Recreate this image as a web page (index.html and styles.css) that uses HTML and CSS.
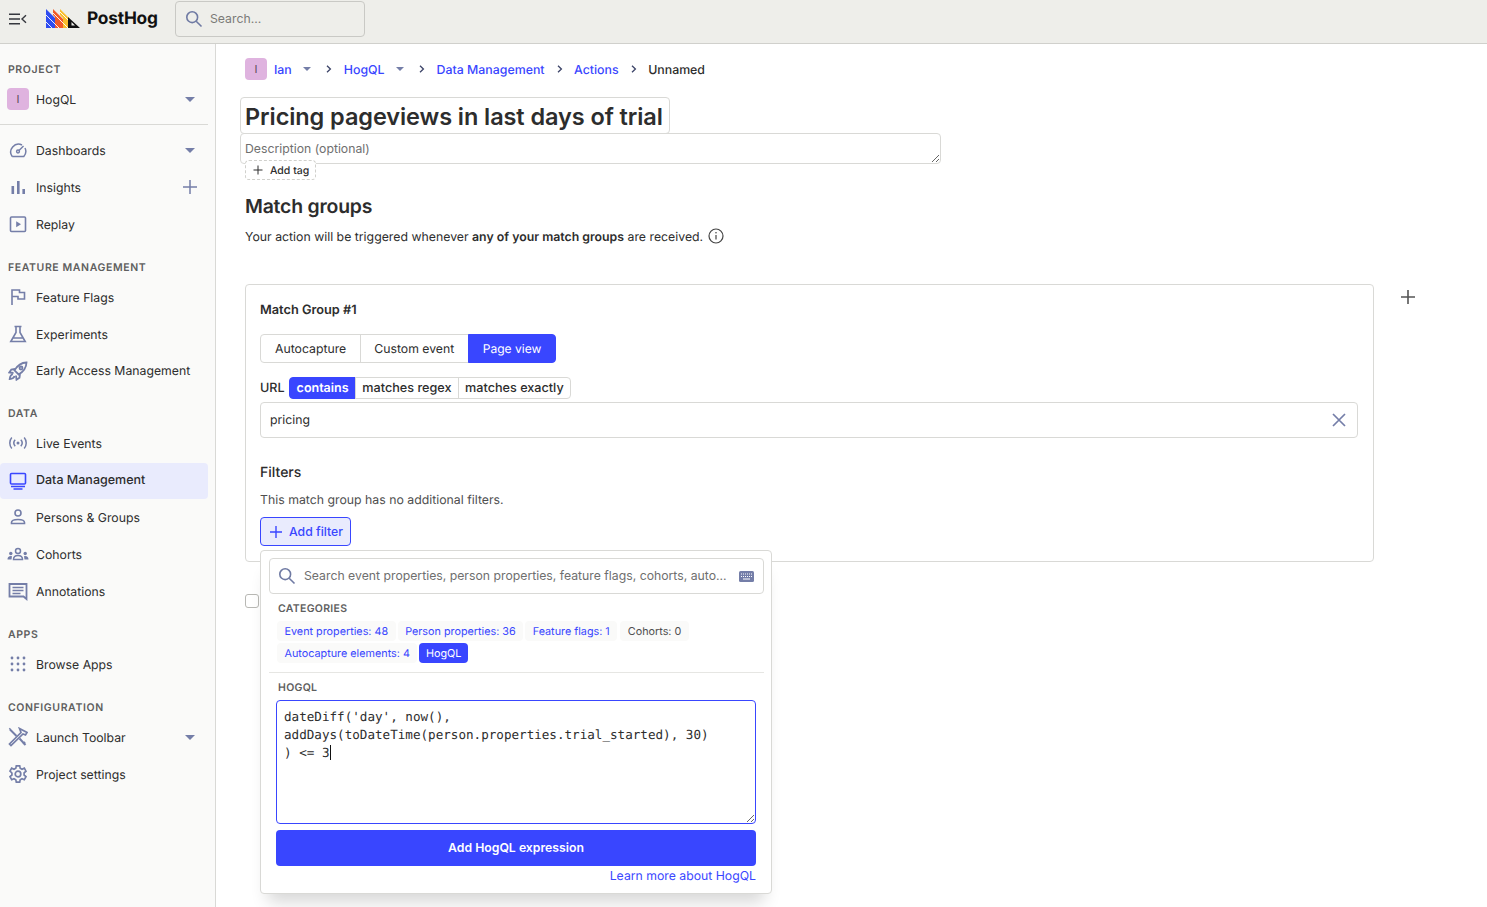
FILE: index.html
```html
<!DOCTYPE html>
<html lang="en">
<head>
<meta charset="utf-8">
<title>PostHog</title>
<link rel="stylesheet" href="styles.css">
</head>
<body>
<header class="topbar">
  <svg class="burger" width="18" height="12" viewBox="0 0 18 12" fill="none" stroke="#35373e" stroke-width="1.4"><path d="M0 1.2h11M0 6h11M0 10.8h11M17 2.2 13 6l4 3.8"/></svg>
  <svg class="logo" width="34" height="20" viewBox="0 0 34 20">
    <path fill="#2f4cf0" d="M0 0 9 9v10H0z"/>
    <path fill="#f15a29" d="M7 0 17 10v9H9V8L7 6z"/>
    <path fill="#f9bd2b" d="M14 0 24 10v9h-7V9l-3-3z"/>
    <path fill="none" stroke="#fff" stroke-width=".9" d="M0 6 13 19M0 13l6 6M7 4l15 15M14 3l10 10"/>
    <path fill="#111" fill-rule="evenodd" d="M22 8 34 19H22zM25.500 16.500H29L25.500 13z"/>
  </svg>
  <span class="brand">PostHog</span>
  <label class="top-search">
    <svg width="18" height="18" viewBox="0 0 18 18" fill="none" stroke="#6f7aa3" stroke-width="1.6"><circle cx="7.2" cy="7.2" r="5.4"/><path d="m11.2 11.2 5.3 5.3"/></svg>
    <input class="top-search-input" type="text" placeholder="Search...">
  </label>
</header>
<div class="layout">
  <aside class="sidebar">
    <h4 class="side-heading">PROJECT</h4>
    <div class="side-item side-project">
      <span class="avatar">I</span><span class="side-label project-label">HogQL</span>
      <svg class="caret" width="10" height="5" viewBox="0 0 10 5"><path d="M0 0h10L5 5z"/></svg>
    </div>
    <hr class="side-divider">
    <div class="side-item">
      <svg class="ic" width="20" height="20" viewBox="0 0 20 20" fill="none" stroke="#747ea8" stroke-width="1.5"><path d="M4.200 16.500h11.600a7.800 7.800 0 0 0 1.200-8.500M14 5a7.800 7.800 0 0 0-9.800 11.500"/><circle cx="10" cy="11.500" r="1.400"/><path d="m11 10.500 4.500-4.500"/></svg>
      <span class="side-label">Dashboards</span>
      <svg class="caret" width="10" height="5" viewBox="0 0 10 5"><path d="M0 0h10L5 5z"/></svg>
    </div>
    <div class="side-item">
      <svg class="ic" width="20" height="20" viewBox="0 0 20 20" fill="#747ea8"><rect x="3.500" y="9" width="2.600" height="8"/><rect x="9" y="4" width="2.600" height="13"/><rect x="14.400" y="12" width="2.600" height="5"/></svg>
      <span class="side-label">Insights</span>
      <svg class="plus-ic" width="14" height="14" viewBox="0 0 14 14" stroke="#747ea8" stroke-width="1.5"><path d="M7 0v14M0 7h14"/></svg>
    </div>
    <div class="side-item">
      <svg class="ic" width="20" height="20" viewBox="0 0 20 20" fill="none" stroke="#747ea8" stroke-width="1.6"><rect x="2.500" y="3" width="15" height="14.500" rx="1"/><path fill="#747ea8" stroke="none" d="M8.200 7.200 13 10.200l-4.800 3z"/></svg>
      <span class="side-label">Replay</span>
    </div>

    <h4 class="side-heading section-gap">FEATURE MANAGEMENT</h4>
    <div class="side-item">
      <svg class="ic" width="20" height="20" viewBox="0 0 20 20" fill="none" stroke="#747ea8" stroke-width="1.6"><path d="M4 18V3h7.500v2.500H16.500V12H10V9.500H4"/></svg>
      <span class="side-label">Feature Flags</span>
    </div>
    <div class="side-item">
      <svg class="ic" width="20" height="20" viewBox="0 0 20 20" fill="none" stroke="#747ea8" stroke-width="1.6"><path d="M6.500 2.500h7M8 2.500v6L2.800 17.500h14.400L12 8.500v-6M5 14h10"/></svg>
      <span class="side-label">Experiments</span>
    </div>
    <div class="side-item side-item-short">
      <svg class="ic" width="20" height="20" viewBox="0 0 20 20" fill="none" stroke="#747ea8" stroke-width="1.800"><path d="M18.500 1.500c-5.500.2-9 2.800-12 7.800l4.200 4.200c5-3 7.600-6.500 7.800-12zM7 8 3.300 8.500l-2 3 4.200.5M12 13l-.5 3.700-3 2-.5-4.200"/><circle cx="13" cy="7" r="1.500"/><path d="M4.800 13.200c-1.700.5-2.800 2.200-3.100 4.900 2.700-.3 4.400-1.400 4.900-3.100"/></svg>
      <span class="side-label">Early Access Management</span>
    </div>

    <h4 class="side-heading section-gap">DATA</h4>
    <div class="side-item">
      <svg class="ic" width="20" height="20" viewBox="0 0 20 20" fill="none" stroke="#747ea8" stroke-width="1.500"><circle cx="10" cy="10" r="1.500" fill="#747ea8" stroke="none"/><path d="M7.200 6.800a4.800 4.800 0 0 0 0 6.400M12.800 6.800a4.800 4.800 0 0 1 0 6.400M3.800 4.500a8.500 8.500 0 0 0 0 11M16.200 4.500a8.500 8.500 0 0 1 0 11"/></svg>
      <span class="side-label">Live Events</span>
    </div>
    <div class="side-item side-item-active">
      <svg class="ic" width="20" height="20" viewBox="0 0 20 20" fill="none" stroke="#3946ff" stroke-width="1.600"><rect x="2.500" y="2.500" width="15" height="10.500" rx="1"/><path d="M3 15.500h14M5.500 18h9"/></svg>
      <span class="side-label">Data Management</span>
    </div>
    <div class="side-item">
      <svg class="ic" width="20" height="20" viewBox="0 0 20 20" fill="none" stroke="#747ea8" stroke-width="1.600"><circle cx="10" cy="6" r="3"/><path d="M3.500 16.500v-1c0-2 2-3 6.500-3s6.500 1 6.500 3v1z"/></svg>
      <span class="side-label">Persons &amp; Groups</span>
    </div>
    <div class="side-item">
      <svg class="ic ic-wide" width="22" height="20" viewBox="0 0 22 20" fill="#747ea8"><circle cx="11" cy="7" r="2.500" fill="none" stroke="#747ea8" stroke-width="1.500"/><path d="M6.500 15.500c0-3 2-4 4.500-4s4.500 1 4.500 4z" fill="none" stroke="#747ea8" stroke-width="1.500"/><circle cx="3.800" cy="9.500" r="1.700"/><circle cx="18.200" cy="9.500" r="1.700"/><path d="M0.500 15.500c0-2.300 1-3.500 3.500-3.500l1 .3-.5 3.200zM21.500 15.500c0-2.300-1-3.500-3.500-3.500l-1 .3.500 3.200z"/></svg>
      <span class="side-label">Cohorts</span>
    </div>
    <div class="side-item">
      <svg class="ic" width="20" height="20" viewBox="0 0 20 20" fill="none" stroke="#747ea8" stroke-width="1.800"><path d="M1.500 3h17v15l-3-2.500H1.500z"/><path d="M4.500 6.500h11M4.500 9.500h11M4.500 12.500h8" stroke-width="1.400"/></svg>
      <span class="side-label">Annotations</span>
    </div>

    <h4 class="side-heading section-gap">APPS</h4>
    <div class="side-item">
      <svg class="ic" width="20" height="20" viewBox="0 0 20 20" fill="#747ea8"><circle cx="4" cy="4" r="1.400"/><circle cx="10" cy="4" r="1.400"/><circle cx="16" cy="4" r="1.400"/><circle cx="4" cy="10" r="1.400"/><circle cx="10" cy="10" r="1.400"/><circle cx="16" cy="10" r="1.400"/><circle cx="4" cy="16" r="1.400"/><circle cx="10" cy="16" r="1.400"/><circle cx="16" cy="16" r="1.400"/></svg>
      <span class="side-label">Browse Apps</span>
    </div>

    <h4 class="side-heading section-gap">CONFIGURATION</h4>
    <div class="side-item">
      <svg class="ic" width="20" height="20" viewBox="0 0 20 20" fill="none" stroke="#747ea8" stroke-width="2"><path d="M2 2.500 8.500 9M11.500 11.500l6 6.500M15 17l2-2" /><path d="M11.500 1.500 19 5.500l-1.500 2.500-2.500-1L3 18.500 1.500 17 13 5.500z" stroke-width="1.700"/><path d="M2.500 1.500 1.500 2.500" /></svg>
      <span class="side-label">Launch Toolbar</span>
      <svg class="caret" width="10" height="5" viewBox="0 0 10 5"><path d="M0 0h10L5 5z"/></svg>
    </div>
    <div class="side-item">
      <svg class="ic" width="20" height="20" viewBox="0 0 20 20" fill="none" stroke="#747ea8" stroke-width="1.700"><circle cx="10" cy="10" r="2.800"/><path d="M8.300 1.800h3.400l.5 2.500 1.800.9 2.300-1 1.700 3-1.900 1.700v2.100l1.900 1.700-1.700 3-2.300-1-1.800 1-.5 2.500H8.300l-.5-2.500-1.800-1-2.300 1-1.700-3 1.900-1.700V9L2 7.200l1.700-3 2.300 1 1.800-.9z"/></svg>
      <span class="side-label">Project settings</span>
    </div>
  </aside>

  <main class="content">
    <nav class="crumbs">
      <span class="avatar">I</span>
      <a class="link crumb-first">Ian</a>
      <svg class="caret crumb-caret" width="8" height="4" viewBox="0 0 10 5"><path d="M0 0h10L5 5z"/></svg>
      <svg class="chev" width="6" height="8" viewBox="0 0 6 8" fill="none" stroke="#3c4468" stroke-width="1.300"><path d="m1 .8 3.400 3.200L1 7.200"/></svg>
      <a class="link">HogQL</a>
      <svg class="caret crumb-caret" width="8" height="4" viewBox="0 0 10 5"><path d="M0 0h10L5 5z"/></svg>
      <svg class="chev" width="6" height="8" viewBox="0 0 6 8" fill="none" stroke="#3c4468" stroke-width="1.300"><path d="m1 .8 3.400 3.200L1 7.200"/></svg>
      <a class="link">Data Management</a>
      <svg class="chev" width="6" height="8" viewBox="0 0 6 8" fill="none" stroke="#3c4468" stroke-width="1.300"><path d="m1 .8 3.400 3.200L1 7.200"/></svg>
      <a class="link">Actions</a>
      <svg class="chev" width="6" height="8" viewBox="0 0 6 8" fill="none" stroke="#3c4468" stroke-width="1.300"><path d="m1 .8 3.400 3.200L1 7.200"/></svg>
      <span class="crumb-current">Unnamed</span>
    </nav>

    <input class="title-input" type="text" value="Pricing pageviews in last days of trial">
    <textarea class="desc-input" placeholder="Description (optional)"></textarea>
    <div class="add-tag">
      <svg width="10" height="10" viewBox="0 0 10 10" stroke="#2d2d2d" stroke-width="1"><path d="M5 .5v9M.5 5h9"/></svg>
      <span>Add tag</span>
    </div>

    <h2 class="section-title">Match groups</h2>
    <p class="section-desc">Your action will be triggered whenever <b>any of your match groups</b> are received. <svg class="info" width="16" height="16" viewBox="0 0 16 16" fill="none" stroke="#444" stroke-width="1.200"><circle cx="8" cy="8" r="7"/><path d="M8 7v4.500"/><circle cx="8" cy="4.700" r=".8" fill="#444" stroke="none"/></svg></p>

    <div class="groups-row">
      <section class="group-card">
        <h3 class="group-title">Match Group #1</h3>
        <div class="seg">
          <span class="seg-item">Autocapture</span>
          <span class="seg-item">Custom event</span>
          <span class="seg-item seg-on">Page view</span>
        </div>
        <div class="url-row">
          <span class="url-label">URL</span>
          <div class="seg-small">
            <span class="seg-small-item seg-small-on">contains</span>
            <span class="seg-small-item">matches regex</span>
            <span class="seg-small-item">matches exactly</span>
          </div>
        </div>
        <div class="url-input">
          <span class="url-value">pricing</span>
          <svg width="14" height="14" viewBox="0 0 14 14" stroke="#747ea8" stroke-width="1.700"><path d="m1 1 12 12M13 1 1 13"/></svg>
        </div>
        <h3 class="filters-title">Filters</h3>
        <p class="filters-note">This match group has no additional filters.</p>
        <div class="filter-anchor">
          <button class="add-filter" type="button">
            <svg width="12" height="12" viewBox="0 0 12 12" stroke="#3946ff" stroke-width="1.400"><path d="M6 0v12M0 6h12"/></svg>
            Add filter
          </button>
          <div class="popover">
            <label class="pop-search">
              <svg width="18" height="18" viewBox="0 0 18 18" fill="none" stroke="#6f7aa3" stroke-width="1.600"><circle cx="7.200" cy="7.200" r="5.400"/><path d="m11.200 11.200 5.300 5.300"/></svg>
              <input class="pop-search-input" type="text" placeholder="Search event properties, person properties, feature flags, cohorts, auto...">
              <svg width="15" height="11" viewBox="0 0 15 11"><rect width="15" height="11" rx="1.500" fill="#747ea8"/><path stroke="#fff" stroke-width="1" stroke-dasharray="1 1" d="M2 3h11M2 5.500h11"/><path stroke="#fff" stroke-width="1" d="M4 8h7"/></svg>
            </label>
            <h4 class="pop-heading">CATEGORIES</h4>
            <div class="tags">
              <span class="tag">Event properties: 48</span>
              <span class="tag">Person properties: 36</span>
              <span class="tag">Feature flags: 1</span>
              <span class="tag tag-muted">Cohorts: 0</span>
              <span class="tag">Autocapture elements: 4</span>
              <span class="tag tag-on">HogQL</span>
            </div>
            <hr class="pop-divider">
            <h4 class="pop-heading pop-heading-hogql">HOGQL</h4>
            <div class="code-area">dateDiff('day', now(),
addDays(toDateTime(person.properties.trial_started), 30)
) &lt;= 3<span class="text-caret"></span></div>
            <button class="primary" type="button">Add HogQL expression</button>
            <div class="learn"><a class="link">Learn more about HogQL</a></div>
          </div>
        </div>
      </section>
      <svg class="add-group" width="16" height="16" viewBox="0 0 16 16" stroke="#555" stroke-width="1.600"><path d="M8 1v14M1 8h14"/></svg>
    </div>
    <span class="checkbox"></span>
  </main>
</div>
</body>
</html>
```
FILE: styles.css
```css
* { box-sizing: border-box; }
html, body { margin: 0; height: 100%; overflow: hidden; }
body {
  font-family: Inter, "Liberation Sans", sans-serif;
  font-size: 12.25px;
  color: #2d2d2d;
  background: #fff;
  display: flex;
  flex-direction: column;
  text-rendering: geometricPrecision;
}
.topbar {
  height: 44px;
  flex: none;
  display: flex;
  align-items: center;
  padding-bottom: 6px;
  background: #eeeeea;
  border-bottom: 1px solid #d0d0cc;
}
.burger { margin-left: 9px; }
.logo { margin-left: 19px; }
.brand {
  margin-left: 7px;
  width: 71px;
  font-size: 17.3px;
  font-weight: 700;
  color: #111;
  letter-spacing: -.2px;
  white-space: nowrap;
}
.top-search {
  margin-left: 17px;
  width: 190px;
  height: 36px;
  border: 1px solid #c9c9c5;
  border-radius: 4px;
  display: flex;
  align-items: center;
  gap: 7px;
  padding-left: 9px;
}
.top-search-input {
  border: 0;
  background: transparent;
  font: inherit;
  width: 140px;
  padding: 0;
  outline: 0;
}
.top-search-input::placeholder { color: #7b7b78; }

.layout { flex: 1; display: flex; min-height: 0; }
.sidebar {
  width: 216px;
  flex: none;
  background: #fafaf9;
  border-right: 1px solid #d9d9d6;
  padding: 18px 7px 0 0;
}
.side-heading {
  margin: 0 0 3px;
  padding-left: 8px;
  font-size: 10.500px;
  line-height: 16px;
  font-weight: 600;
  letter-spacing: .6px;
  color: #5f5f5f;
}
.section-gap { margin-top: 17px; }
.side-item {
  height: 37px;
  display: flex;
  align-items: center;
  padding: 0 0 1px 8px;
  border-radius: 4px;
}
.side-item.side-project { height: 36px; padding: 0 0 0 7px; }
.side-item-short { height: 36px; }
.side-item-active { background: #e9ebfd; height: 36px; margin-top: 1px; font-size: 12.500px; font-weight: 500; }
.ic { width: 20px; flex: none; margin-right: 8px; }
.ic-wide { width: 22px; margin-left: -1px; margin-right: 7px; }
.side-label { flex: 1; }
.project-label { margin-left: 7px; }
.caret { fill: #747ea8; flex: none; margin-right: 13px; }
.plus-ic { flex: none; margin-right: 11px; }
.avatar {
  width: 22px;
  height: 22px;
  flex: none;
  border-radius: 4px;
  background: #dfb3df;
  color: #5a4a5a;
  font-size: 11px;
  display: flex;
  align-items: center;
  justify-content: center;
}
.side-divider {
  border: 0;
  border-top: 1px solid #d9d9d6;
  margin: 7px 0 7px;
}

.content { flex: 1; padding: 14px 0 0 29px; min-width: 0; }
.crumbs { display: flex; align-items: center; height: 22px; font-size: 12.350px; }
.link { color: #3946ff; font-weight: 500; cursor: pointer; }
.crumb-first { margin-left: 7px; }
.chev { margin: 0 11.500px 0 12px; }
.caret.crumb-caret { margin: 0 3.500px 0 11px; }
.crumb-current { font-weight: 500; }

.title-input {
  display: block;
  margin: 17px 0 0 -5px;
  width: 430px;
  height: 37px;
  padding: 2px 4px 0;
  font: 600 23.500px Inter, sans-serif;
  color: #2d2d2d;
  border: 1px solid #d9d9d6;
  border-radius: 4px;
  outline: 0;
  letter-spacing: -.08px;
}
.desc-input {
  display: block;
  margin: -1px 0 0 -5px;
  width: 701px;
  height: 31px;
  padding: 7px 4px 5px;
  font: 12.250px Inter, sans-serif;
  color: #2d2d2d;
  border: 1px solid #d9d9d6;
  border-radius: 4px;
  outline: 0;
}
.desc-input::placeholder { color: #6f6f6f; }
.add-tag {
  position: relative;
  width: 71px;
  height: 20px;
  margin-top: -4px;
  background: #fff;
  border: 1px dashed #d0d0cc;
  border-radius: 4px;
  display: flex;
  align-items: center;
  gap: 7px;
  padding-left: 7px;
  font-size: 10.500px;
  font-weight: 500;
}
.section-title {
  margin: 14px 0 0;
  font-size: 19.400px;
  line-height: 24px;
  font-weight: 600;
  letter-spacing: -.2px;
}
.section-desc { margin: 8px 0 0; line-height: 22px; height: 22px; font-size: 12.300px; }
.section-desc b { font-weight: 600; }
.info { margin-left: 1px; vertical-align: -3px; }

.groups-row { display: flex; align-items: flex-start; margin-top: 36px; }
.group-card {
  width: 1129px;
  height: 278px;
  flex: none;
  border: 1px solid #d9d9d6;
  border-radius: 4px;
  padding: 16px 15px 0 14px;
}
.group-title { margin: 0; font-size: 12.750px; line-height: 20px; font-weight: 600; }
.add-group { margin: 5px 0 0 26px; flex: none; }
.seg { display: inline-flex; margin-top: 13px; }
.seg-item {
  height: 29px;
  display: flex;
  align-items: center;
  padding: 0 13.500px;
  border: 1px solid #d9d9d6;
  margin-left: -1px;
}
.seg-item:first-child { margin-left: 0; padding-left: 14px; border-radius: 4px 0 0 4px; }
.seg-item:last-child { border-radius: 0 4px 4px 0; }
.seg-item.seg-on { background: #3946ff; border-color: #3946ff; color: #fff; font-size: 12.050px; padding: 0 14px; }
.url-row { display: flex; align-items: center; margin-top: 14px; height: 22px; }
.url-label { font-weight: 500; margin-right: 4.500px; font-size: 12.600px; }
.seg-small { display: inline-flex; height: 22px; font-size: 12.650px; }
.seg-small-item {
  display: flex;
  align-items: center;
  padding: 0 6.250px;
  border: 1px solid #d9d9d6;
  margin-left: -1px;
  font-weight: 500;
}
.seg-small-item:first-child { margin-left: 0; border-radius: 4px 0 0 4px; }
.seg-small-item:last-child { border-radius: 0 4px 4px 0; }
.seg-small-item.seg-small-on { background: #3946ff; border-color: #3946ff; color: #fff; font-weight: 600; font-size: 12.500px; padding: 0 6.500px; }
.url-input {
  margin-top: 3px;
  height: 36px;
  border: 1px solid #d9d9d6;
  border-radius: 4px;
  padding: 0 11px 0 9px;
  display: flex;
  align-items: center;
  justify-content: space-between;
}
.url-value { margin-bottom: 2px; }
.filters-title { margin: 25px 0 0; font-size: 14px; line-height: 20px; font-weight: 500; }
.filters-note { margin: 8px 0 0; line-height: 18px; color: #4f4f4f; font-size: 12.300px; }
.filter-anchor { position: relative; margin-top: 8px; }
.add-filter {
  width: 91px;
  height: 29px;
  display: flex;
  align-items: center;
  gap: 7px;
  padding: 0 0 0 9px;
  background: #e9ebfd;
  color: #3946ff;
  border: 1px solid #3946ff;
  border-radius: 4px;
  font: 500 12.250px Inter, sans-serif;
}
.popover {
  position: absolute;
  top: 33px;
  left: 0;
  width: 512px;
  height: 344px;
  background: #fff;
  border: 1px solid #d9d9d6;
  border-radius: 4px;
  padding: 7px 7px 0 8px;
  box-shadow: 0 16px 16px -8px rgba(0, 0, 0, .16);
}
.pop-search {
  height: 36px;
  border: 1px solid #d9d9d6;
  border-radius: 4px;
  display: flex;
  align-items: center;
  padding: 0 9px 0 8px;
}
.pop-search-input {
  flex: 1;
  min-width: 0;
  border: 0;
  outline: 0;
  padding: 0;
  margin: 0 10px 2px 8px;
  font: 12.250px Inter, sans-serif;
}
.pop-search-input::placeholder { color: #6f6f6f; }
.pop-heading {
  margin: 7px 0 0 9px;
  font-size: 10.500px;
  line-height: 16px;
  font-weight: 600;
  letter-spacing: .3px;
  color: #5f5f5f;
}
.tags { display: flex; flex-wrap: wrap; gap: 2px; margin: 4px 0 0 8px; width: 420px; }
.tag {
  height: 20px;
  display: flex;
  align-items: center;
  padding: 0 7.500px;
  border-radius: 4px;
  background: #fafaf9;
  color: #3946ff;
  font-size: 10.800px;
}
.tag-muted { color: #4f4f4f; margin-left: 1px; }
.tag.tag-on { background: #3946ff; color: #fff; padding: 0 6.500px; }
.pop-divider { border: 0; border-top: 1px solid #e6e6e3; margin: 9px 0 0 0; }
.pop-heading-hogql { margin-top: 7px; }
.code-area {
  margin: 4px 0 0 7px;
  width: 480px;
  height: 124px;
  padding: 7px 7px;
  border: 1px solid #3946ff;
  border-radius: 4px;
  font: 12.600px/18px "DejaVu Sans Mono", monospace;
  white-space: pre;
  overflow: auto;
  resize: both;
}
.text-caret { border-right: 1px solid #111; }
.primary {
  display: block;
  margin: 6px 0 0 7px;
  width: 480px;
  height: 36px;
  border: 0;
  border-radius: 4px;
  padding: 0 0 2px;
  background: #3946ff;
  color: #fff;
  font: 600 12.250px Inter, sans-serif;
}
.learn { width: 480px; margin-left: 7px; text-align: right; line-height: 20px; }
.learn .link { font-weight: 400; }
.checkbox {
  display: block;
  margin-top: 32px;
  width: 14px;
  height: 14px;
  border: 1px solid #b8b8b4;
  border-radius: 3px;
}
```
